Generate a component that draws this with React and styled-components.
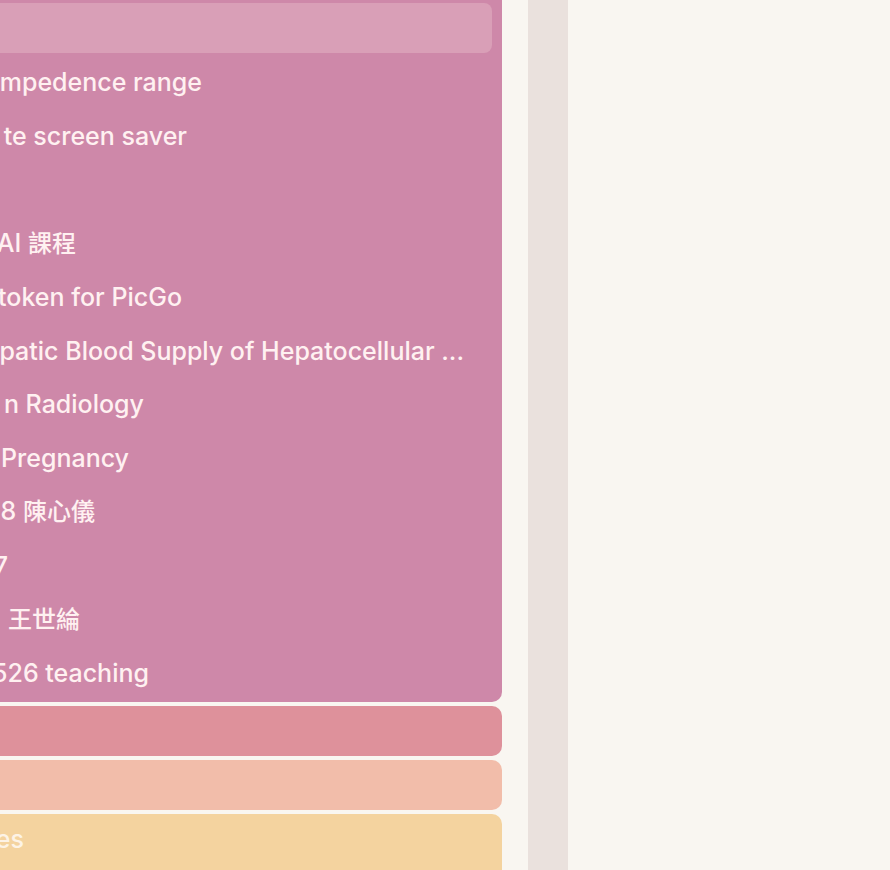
import React from "react";
import styled, { createGlobalStyle } from "styled-components";

const GlobalStyle = createGlobalStyle`
  * { box-sizing: border-box; }
  body {
    margin: 0;
    background: #f9f6f1;
    font-family: Inter, "Noto Sans CJK TC", sans-serif;
  }
`;

const Page = styled.div`
  display: grid;
  grid-template-columns: 502px 40px minmax(0, 1fr);
  column-gap: 26px;
  min-height: 100vh;
  overflow: hidden;
`;

const Sidebar = styled.nav`
  display: flex;
  flex-direction: column;
  gap: 4px;
  min-width: 0;
`;

const TabList = styled.ul`
  flex: 1;
  display: flex;
  flex-direction: column;
  justify-content: space-between;
  margin: 0;
  padding: 3px 10px 4px 0;
  list-style: none;
  background: #ce88a9;
  border-radius: 0 0 10px 0;
`;

const TabRow = styled.button`
  display: flex;
  align-items: center;
  width: 100%;
  height: 50px;
  padding: 0;
  border: 0;
  border-radius: 0 8px 8px 0;
  background: ${(p) => (p.$active ? "#d99fb7" : "transparent")};
  color: #fff1f1;
  font: inherit;
`;

const Label = styled.span`
  display: flex;
  justify-content: flex-end;
  width: ${(p) => p.$reach}px;
  overflow: hidden;
  font-size: 25px;
  font-weight: 500;
  line-height: 36px;
  white-space: pre;
`;

const Han = styled.span`
  font-size: 24px;
  font-weight: 500;
`;

const Group = styled.button`
  display: flex;
  align-items: center;
  height: ${(p) => (p.$last ? 56 : 50)}px;
  padding: ${(p) => (p.$last ? "0 0 6px" : "0")};
  border: 0;
  border-radius: ${(p) => (p.$last ? "0 10px 0 0" : "0 10px 10px 0")};
  background: ${(p) => p.$color};
  color: #fdf3e6;
  font: inherit;
`;

const Divider = styled.div`
  background: #eae1dd;
`;

const Content = styled.main`
  min-width: 0;
`;

const tabs = [
  { text: "", active: true },
  { text: "mpedence range", reach: 202 },
  { text: "te screen saver", reach: 187 },
  { text: "" },
  { text: "AI ", han: "課程", reach: 76 },
  { text: "token for PicGo", reach: 182 },
  { text: "patic Blood Supply of Hepatocellular ...", reach: 464 },
  { text: "n Radiology", reach: 144 },
  { text: "Pregnancy", reach: 129 },
  { text: "8 ", han: "陳心儀", reach: 95 },
  { text: "7", reach: 8 },
  { text: " ", han: "王世綸", reach: 80 },
  { text: "526 teaching", reach: 149 },
];

const groups = [
  { name: "Red group", color: "#de919b" },
  { name: "Peach group", color: "#f2bdaa" },
  { name: "Yellow group", color: "#f4d39f", text: "es", reach: 24 },
];

export default function App() {
  return (
    <>
      <GlobalStyle />
      <Page>
        <Sidebar>
          <TabList>
            {tabs.map((tab, i) => (
              <li key={i}>
                <TabRow
                  type="button"
                  $active={tab.active}
                  aria-label={tab.text ? undefined : "Untitled tab"}
                >
                  {tab.text && (
                    <Label $reach={tab.reach}>
                      <span>
                        {tab.text}
                        {tab.han && <Han lang="zh-Hant">{tab.han}</Han>}
                      </span>
                    </Label>
                  )}
                </TabRow>
              </li>
            ))}
          </TabList>
          {groups.map((group) => (
            <Group
              key={group.name}
              type="button"
              $color={group.color}
              $last={Boolean(group.text)}
              aria-label={group.text ? undefined : group.name}
            >
              {group.text && <Label $reach={group.reach}>{group.text}</Label>}
            </Group>
          ))}
        </Sidebar>
        <Divider />
        <Content />
      </Page>
    </>
  );
}
